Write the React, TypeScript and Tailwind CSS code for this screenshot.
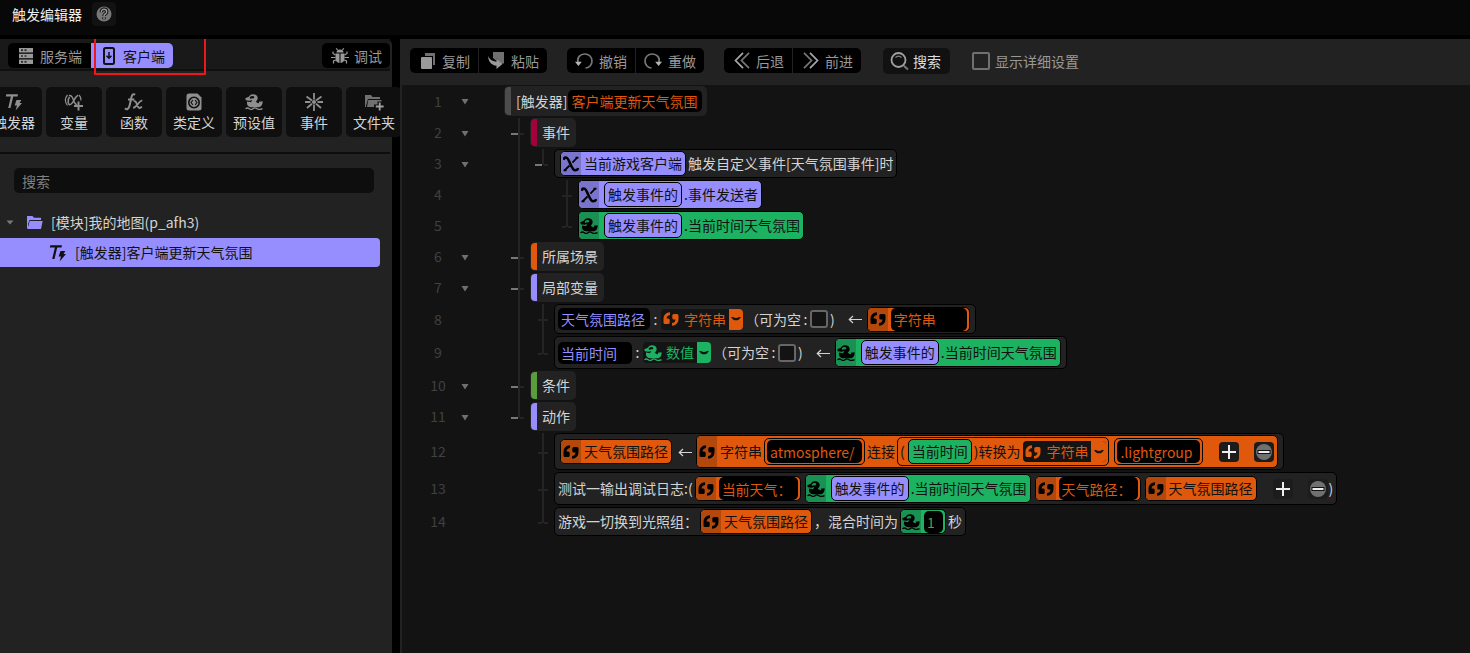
import type { ReactNode } from "react";
import clsx from "clsx";

type Tone = "orange" | "green" | "purple";

const toneBg = {
  orange: "bg-[#df580b]",
  green: "bg-[#1db262]",
  purple: "bg-[#968eff]",
};

const toneDark = {
  orange: "bg-[#b3480c]",
  green: "bg-[#1a9052]",
  purple: "bg-[#7a74cc]",
};

const toneText = {
  orange: "text-[#df580b]",
  green: "text-[#1db262]",
  purple: "text-[#968eff]",
};

/* ---------- icons ---------- */

function QuoteIcon() {
  return (
    <svg width="16" height="14" viewBox="0 0 16 14" fill="currentColor">
      <path d="M7 .3C3 .5 .5 3 .5 7.300V10.500Q.5 12 2 12H5Q6.700 12 6.700 10.400V8Q6.700 6.500 5.200 6.500H3.500C3.600 4.500 4.800 3.200 7 2.900Z" />
      <path d="M9 13.700C13 13.500 15.500 11 15.500 6.700V3.500Q15.500 2 14 2H11Q9.300 2 9.300 3.600V6Q9.300 7.500 10.800 7.500H12.500C12.400 9.500 11.200 10.800 9 11.100Z" />
    </svg>
  );
}

function DuckIcon() {
  return (
    <svg width="18" height="16" viewBox="0 0 18 16" fill="currentColor">
      <path
        fillRule="evenodd"
        d="M.3 4.300L3.800 2.700C4.800 1 6.300 .2 8 .2C10.800 .2 12.700 1.800 12.700 4C12.700 5.600 11.800 6.700 10.700 7.700L13 9.300L14.200 8.900L13.800 7.800L17.600 7.200C17.800 10.600 16.300 13.200 13.300 13.200H6.200C3.800 13.200 2 11.500 2 9.500V7.500L6 8.300L7.300 6L4.500 6.700L.8 6.300ZM5.800 2.300L4.600 3.700L5 4.700L8.800 4.200C9.700 3.500 9.300 2.100 8 2Z"
      />
      <path d="M.5 14.900Q2.300 13.200 4.300 14.700T8 14.700T12 14.700T17.500 14.700" fill="none" stroke="currentColor" strokeWidth="1.300" />
    </svg>
  );
}

function ChiIcon() {
  return (
    <svg width="16" height="16" viewBox="0 0 16 16" fill="none" stroke="currentColor">
      <path d="M.7 3.800C.9 2 1.800 1.500 3 1.500C6.500 1.500 8 14.300 12.300 14.300C13.800 14.300 14.800 13.600 15.200 12" strokeWidth="2.600" />
      <path d="M14.300 1.500L9.400 6.700M6.500 9.500L1.500 14.500" strokeWidth="1.800" />
      <path d="M12.500 1.600H15.500M.5 14.300H3.500" strokeWidth="1.800" />
    </svg>
  );
}

function TriggerIcon() {
  return (
    <svg width="18" height="18" viewBox="0 0 18 18" fill="currentColor">
      <path d="M1.300 1.300H13L12.500 3.500H8.200L5.500 15H3.200L5.900 3.500H.8Z" />
      <path d="M11.500 7H16.300L14.500 10H17L10.600 17.500L12 12.600H9.600Z" />
    </svg>
  );
}

function AlphaPlusIcon() {
  return (
    <svg width="20" height="18" viewBox="0 0 20 18" fill="none" stroke="currentColor">
      <path d="M3.500 2Q-.8 7 3.500 12.500M15 2Q17.300 4.500 16.800 7.500" strokeWidth="1.200" />
      <path d="M5 2.700C10 1.200 9 12 13 11.500M14 2.200C10 4.700 9 12 5.500 11.700C3.500 11 4 6 5.500 4" strokeWidth="1.500" />
      <path d="M14.500 8.500V17.500M10 13H19" strokeWidth="2" />
    </svg>
  );
}

function FxIcon() {
  return (
    <svg width="20" height="18" viewBox="0 0 20 18" fill="none" stroke="currentColor">
      <path d="M1 15.300C3 17.300 4.800 15.800 5.600 12.500L7.500 4C8.200 1.300 9.300 .7 11.200 1.700M4 6.500H10.300" strokeWidth="2" />
      <path d="M9.700 8.500C13 6.300 12.700 15 15.300 15C16.300 15 17.200 14.500 17.800 13.500M18.300 7.700C15 7 12.500 15.300 9 14.700" strokeWidth="1.800" />
    </svg>
  );
}

function ClassIcon() {
  return (
    <svg width="16" height="18" viewBox="0 0 16 18">
      <path fill="currentColor" d="M3 .5H11.500L15.500 4.500V15Q15.500 17.500 13 17.500H3Q.5 17.500 .5 15V3Q.5 .5 3 .5Z" />
      <circle cx="8" cy="9.500" r="5.200" fill="none" stroke="#101010" strokeWidth="1.600" />
      <path d="M6.900 7.200L5 9.500L6.900 11.800M9.100 7.200L11 9.500L9.100 11.800" fill="none" stroke="#101010" strokeWidth="1.100" />
    </svg>
  );
}

function EventIcon() {
  return (
    <svg width="18" height="18" viewBox="0 0 18 18" stroke="currentColor" strokeWidth="1.800">
      <path d="M9 0V6.500M9 11.500V18M1.500 3.500L7 7.500M16.500 3.500L11 7.500M0 9H5.500M12.500 9H18M2 15L7 10.800M16 15L11 10.800" />
      <circle cx="9" cy="9" r="1.200" fill="currentColor" />
    </svg>
  );
}

function FolderPlusIcon() {
  return (
    <svg width="20" height="18" viewBox="0 0 20 18" fill="currentColor" className="text-[#707070]">
      <path d="M1 2H7L8.500 4H16V6H4L2 12.500V14H1Z" />
      <path d="M4.200 7H17.500V8.500H13.500V11.500H10V14H3Z" />
      <path fill="#a0a0a0" d="M14.800 9.500H16.600V12.600H19.600V14.400H16.600V17.500H14.800V14.400H11.800V12.600H14.800Z" />
    </svg>
  );
}

function FolderIcon() {
  return (
    <svg width="16" height="13" viewBox="0 0 16 13" fill="currentColor">
      <path d="M0 0H5.500L7 1.800H14V4H2.500L1 8V12.500H0Z" />
      <path d="M2.700 5H15.700L14 12.900H.5Z" />
    </svg>
  );
}

function ServerIcon() {
  return (
    <svg width="14" height="16" viewBox="0 0 14 16">
      <path fill="currentColor" d="M0 0H14V4.500H0ZM0 5.800H14V10.300H0ZM0 11.600H14V16H0Z" />
      <path d="M2 2.200H4M5.500 2.200H7.500M2 8H4M5.500 8H7.500M2 13.800H4M5.500 13.800H7.500" stroke="#000" strokeWidth="1.200" />
    </svg>
  );
}

function DeviceIcon() {
  return (
    <svg width="12" height="18" viewBox="0 0 12 18" fill="none" stroke="currentColor">
      <rect x="1" y="1" width="10" height="16" rx="1.500" strokeWidth="2" />
      <path d="M6 5V11M3.500 8.800L6 11.300L8.500 8.800" strokeWidth="1.500" />
    </svg>
  );
}

function BugIcon() {
  return (
    <svg width="18" height="16" viewBox="0 0 18 16">
      <path fill="currentColor" d="M5.500 4.500Q5.500 1.500 9 1.500T12.500 4.500ZM4.500 5.500H8.500V15Q4.500 14.500 4.500 10ZM9.500 5.500H13.500V10Q13.500 14.500 9.500 15Z" />
      <path d="M4.500 7L2 5.500V3.500M13.500 7L16 5.500V3.500M4.500 9.500H0M13.500 9.500H18M5 12L2.500 13V15.500M13 12L15.500 13V15.500M6.500 2L5.300 .3M11.500 2L12.700 .3" fill="none" stroke="currentColor" strokeWidth="1.200" />
    </svg>
  );
}

function CopyIcon() {
  return (
    <svg width="15" height="16" viewBox="0 0 15 16">
      <path fill="#707070" d="M4 0H14V12H12V3H4Z" />
      <rect y="4" width="11" height="12" rx="1" fill="#9a9a9a" />
    </svg>
  );
}

function PasteIcon() {
  return (
    <svg width="17" height="17" viewBox="0 0 17 17">
      <path fill="#707070" d="M5 0H16V11.500H13.500L8.500 6.500V9L5 6Z" />
      <path fill="#9a9a9a" d="M0 4C2 8 5 9.500 8.500 9.700V6.500L14.500 12L8.500 17V13.700C3.500 13.300 .3 9.500 0 4Z" />
    </svg>
  );
}

function UndoIcon({ flip = false }: { flip?: boolean }) {
  return (
    <svg width="18" height="16" viewBox="0 0 18 16" className={flip ? "-scale-x-100" : ""}>
      <path d="M3 9.500C1.800 4.500 5 1 9.800 1C14 1 17 4 17 8C17 12 14 15 10.500 15" fill="none" stroke="#777" strokeWidth="1.700" />
      <path d="M0 8.800H6.800L3.400 13Z" fill="#b5b5b5" />
    </svg>
  );
}

function ChevronsIcon({ flip = false }: { flip?: boolean }) {
  return (
    <svg width="16" height="17" viewBox="0 0 16 17" fill="none" strokeWidth="1.700" className={flip ? "-scale-x-100" : ""}>
      <path d="M9 .8L1.500 8.500L9 16.200" stroke="#a8a8a8" />
      <path d="M15 .8L7.500 8.500L15 16.200" stroke="#777" />
    </svg>
  );
}

function SearchIcon() {
  return (
    <svg width="19" height="18" viewBox="0 0 19 18" fill="none">
      <circle cx="8.500" cy="8" r="7" stroke="#a0a0a0" strokeWidth="1.800" />
      <path d="M5.500 5.500Q8.500 2.800 11.500 5.500" stroke="#888" strokeWidth="1.200" />
      <path d="M13.800 13.800L18 17.500" stroke="#777" strokeWidth="2" />
    </svg>
  );
}

function HelpIcon() {
  return (
    <svg width="16" height="16" viewBox="0 0 16 16">
      <circle cx="8" cy="8" r="7.500" fill="#777" />
      <path d="M5.300 6.200C5.300 4.200 6.500 3.300 8 3.300S10.700 4.300 10.700 5.900C10.700 7.900 8 7.900 8 10M8 11.300V13.300" fill="none" stroke="#111" strokeWidth="3.400" />
      <path d="M5.300 6.200C5.300 4.200 6.500 3.300 8 3.300S10.700 4.300 10.700 5.900C10.700 7.900 8 7.900 8 10M8 11.300V13" fill="none" stroke="#999" strokeWidth="1.400" />
    </svg>
  );
}

function Caret() {
  return (
    <svg width="8" height="7" viewBox="0 0 8 7" className="fill-[#707070]">
      <path d="M.5 1H7.500L4 6.500Z" />
    </svg>
  );
}

function Smile() {
  return (
    <svg width="10" height="4" viewBox="0 0 10 4">
      <path d="M0 0H2Q5 1.800 8 0H10L8 2.400Q5 4.200 2 2.400Z" fill="#141414" />
    </svg>
  );
}

const toneIcon = { orange: <QuoteIcon />, green: <DuckIcon />, purple: <ChiIcon /> };

/* ---------- blocks ---------- */

function Chip({ tone, tall, big, className, children }: { tone: Tone; tall?: boolean; big?: boolean; className?: string; children: ReactNode }) {
  return (
    <span className={clsx("flex items-center overflow-hidden rounded-[5px] border border-black text-[#111]", big ? "h-[33px]" : tall ? "h-[29px]" : "h-[25px]", toneBg[tone], className)}>
      <span className={clsx("flex w-5 shrink-0 items-center justify-center self-stretch text-black", toneDark[tone])}>{toneIcon[tone]}</span>
      {children}
    </span>
  );
}

function Var({ tone, children }: { tone: Tone; children: ReactNode }) {
  return <span className={clsx("flex h-[25px] items-center rounded-[5px] border border-black px-[3px] text-[#111]", toneBg[tone])}>{children}</span>;
}

/* a property read from the event that fired the trigger */
function EventMember({ tone, name, className }: { tone: Tone; name: string; className?: string }) {
  return (
    <Chip tone={tone} tall className={clsx("pr-[3px]", className)}>
      <span className="mr-[2px] ml-[5px]">
        <Var tone="purple">触发事件的</Var>
      </span>
      .{name}
    </Chip>
  );
}

function Field({ label, value, tone = "orange", className }: { label: string; value: string; tone?: Tone; className: string }) {
  return <input aria-label={label} defaultValue={value} className={clsx("rounded-[5px] bg-black px-[3px] outline-none", toneText[tone], className)} />;
}

function TypeSelect({ tone, value, width, plain }: { tone: Tone; value: string; width: string; plain?: boolean }) {
  return (
    <span className={clsx("flex h-[21px] items-center overflow-hidden rounded-sm bg-[#141414]", toneText[tone])}>
      <span className="flex w-5 justify-center">{toneIcon[tone]}</span>
      <select aria-label="类型" defaultValue={value} className={clsx("appearance-none bg-transparent pl-[3px] outline-none", width)}>
        <option>{value}</option>
      </select>
      <span className={clsx("flex items-center justify-center self-stretch", plain ? "w-[15px]" : "w-[14px]", toneBg[tone])}>
        <Smile />
      </span>
    </span>
  );
}

function Nullable() {
  return (
    <label className="ml-[2px] flex items-center">
      （可为空<span className="w-[9px] text-center">:</span>
      <input type="checkbox" className="size-[18px] appearance-none rounded-[3px] border-2 border-[#666] bg-[#131313]" />
      <span className="ml-[2px]">)</span>
    </label>
  );
}

function AddRemove() {
  return (
    <span className="ml-4 flex gap-[15px]">
      <button aria-label="添加" className="flex size-5 items-center justify-center rounded-[4px] bg-[#1c1c1c]">
        <svg width="14" height="14" viewBox="0 0 14 14" stroke="#eee" strokeWidth="2">
          <path d="M7 0V14M0 7H14" />
        </svg>
      </button>
      <button aria-label="移除" className="flex size-5 items-center justify-center rounded-[4px] bg-[#1c1c1c]">
        <svg width="16" height="16" viewBox="0 0 16 16">
          <circle cx="8" cy="8" r="8" fill="#707070" />
          <path d="M1.500 8H14.500" stroke="#111" strokeWidth="4" />
          <path d="M2.500 8H13.500" stroke="#eee" strokeWidth="2" />
        </svg>
      </button>
    </span>
  );
}

function Arrow({ className }: { className: string }) {
  return (
    <svg width="14" height="10" viewBox="0 0 14 10" fill="none" stroke="#d4d4d4" strokeWidth="1.200" className={className}>
      <path d="M14 5.500H1.500M5 2L1.300 5.500L5 9" />
    </svg>
  );
}

function Line({ children, height = "h-[29px]", pad = "px-[3px]" }: { children: ReactNode; height?: string; pad?: string }) {
  return <div className={clsx("flex items-center rounded-[5px] border border-black bg-[#222]", height, pad)}>{children}</div>;
}

function Section({ color, children }: { color: string; children: ReactNode }) {
  return (
    <div className="flex h-[29px] items-center overflow-hidden rounded-[5px] bg-[#222] pr-[6px] pl-px">
      <span className={clsx("mr-[5px] h-[27px] w-[6px] rounded-l-[4px]", color)} />
      {children}
    </div>
  );
}

/* "v" passes through, "t" branches, "l" ends here; upper case adds the fold dash */
function Guide({ kind, first }: { kind: string; first: boolean }) {
  const shape = kind.toLowerCase();
  const folds = kind !== " " && kind !== shape;
  const line = shape !== " ";
  const tick = shape === "t" || shape === "l";
  return (
    <span className={clsx("flex shrink-0 items-center", first ? "w-[26px] pl-[6px]" : "w-6 pl-1")}>
      <span className="flex w-2 justify-end">
        <span className={clsx("h-[2px]", folds ? "w-[7px] bg-[#777]" : "w-1", tick && !folds && "bg-[#242424]")} />
      </span>
      <span className="flex w-[2px] flex-col self-stretch">
        <span className={clsx("flex-1", line && "bg-[#242424]")} />
        <span className={clsx("flex-1", line && shape !== "l" && "bg-[#242424]")} />
      </span>
      <span className={clsx("h-[2px] w-1", tick && "bg-[#242424]")} />
    </span>
  );
}

interface Row {
  guides: string;
  fold?: boolean;
  body: ReactNode;
}

const rows: Row[] = [
  {
    guides: "",
    fold: true,
    body: (
      <div className="flex h-[30px] items-center rounded-[5px] bg-[#222] pr-[5px] pl-px">
        <span className="mr-[5px] h-7 w-[6px] rounded-l-[4px] bg-[#4c4c4c]" />
        <span className="mr-px">[触发器]</span>
        <Field label="触发器名称" value="客户端更新天气氛围" className="h-[22px] w-[134px]" />
      </div>
    ),
  },
  { guides: "T", fold: true, body: <Section color="bg-[#a3003c]">事件</Section> },
  {
    guides: "vL",
    fold: true,
    body: (
      <Line pad="pl-[5px] pr-[3px]">
        <Chip tone="purple" className="mr-[2px]">
          <span className="px-[3px]">当前游戏客户端</span>
        </Chip>
        触发自定义事件[天气氛围事件]时
      </Line>
    ),
  },
  { guides: "v t", body: <EventMember tone="purple" name="事件发送者" /> },
  { guides: "v l", body: <EventMember tone="green" name="当前时间天气氛围" /> },
  { guides: "T", fold: true, body: <Section color="bg-[#df580b]">所属场景</Section> },
  { guides: "T", fold: true, body: <Section color="bg-[#968eff]">局部变量</Section> },
  {
    guides: "vt",
    body: (
      <Line height="h-[30px]" pad="pl-[3px] pr-[5px]">
        <Field label="变量名" value="天气氛围路径" tone="purple" className="h-[22px] w-[92px]" />
        <span className="w-[11px] text-center">:</span>
        <TypeSelect tone="orange" value="字符串" width="w-12" />
        <Nullable />
        <Arrow className="mr-[5px] ml-[13px]" />
        <Chip tone="orange">
          <Field label="初始值" value="字符串" className="mr-[2px] ml-[3px] h-[23px] w-[76px]" />
        </Chip>
      </Line>
    ),
  },
  {
    guides: "vl",
    body: (
      <Line height="h-[33px]" pad="pl-[3px] pr-[5px]">
        <Field label="变量名" value="当前时间" tone="purple" className="h-[22px] w-[74px]" />
        <span className="w-[11px] text-center">:</span>
        <TypeSelect tone="green" value="数值" width="w-[34px]" />
        <Nullable />
        <Arrow className="mr-[5px] ml-[13px]" />
        <EventMember tone="green" name="当前时间天气氛围" />
      </Line>
    ),
  },
  { guides: "T", fold: true, body: <Section color="bg-[#5a9e3c]">条件</Section> },
  { guides: "L", fold: true, body: <Section color="bg-[#968eff]">动作</Section> },
  {
    guides: " t",
    body: (
      <Line height="h-[37px]" pad="px-[5px]">
        <Chip tone="orange">
          <span className="px-[3px]">天气氛围路径</span>
        </Chip>
        <Arrow className="mr-1 ml-[6px]" />
        <Chip tone="orange" big className="pr-[3px]">
          <span className="pr-[2px] pl-[3px]">字符串</span>
          <span className="flex h-[27px] items-center rounded-[5px] border border-black px-[2px]">
            <Field label="文本" value="atmosphere/" className="h-[23px] w-[95px]" />
          </span>
          <span className="px-[2px]">连接</span>
          <span className="flex h-[29px] items-center rounded-[5px] border border-black px-[2px]">
            <span className="mr-[3px]">(</span>
            <Var tone="green">当前时间</Var>
            <span className="pr-[3px] pl-[2px]">)转换为</span>
            <TypeSelect tone="orange" value="字符串" width="w-12" plain />
          </span>
          <span className="ml-[5px] flex h-[27px] items-center rounded-[5px] border border-black px-[2px]">
            <Field label="文本" value=".lightgroup" className="h-[23px] w-[83px]" />
          </span>
          <AddRemove />
        </Chip>
      </Line>
    ),
  },
  {
    guides: " t",
    body: (
      <Line height="h-[33px]">
        <span className="mr-[2px]">测试一输出调试日志:(</span>
        <Chip tone="orange">
          <Field label="文本" value="当前天气：" className="mr-[2px] ml-[3px] h-[23px] w-[79px]" />
        </Chip>
        <EventMember tone="green" name="当前时间天气氛围" className="mx-1" />
        <Chip tone="orange">
          <Field label="文本" value="天气路径：" className="mr-[2px] ml-[3px] h-[23px] w-[79px]" />
        </Chip>
        <Chip tone="orange" className="ml-1">
          <span className="px-[3px]">天气氛围路径</span>
        </Chip>
        <AddRemove />
        <span className="ml-px">)</span>
      </Line>
    ),
  },
  {
    guides: " l",
    body: (
      <Line>
        游戏一切换到光照组：
        <Chip tone="orange" className="mx-[2px]">
          <span className="px-[3px]">天气氛围路径</span>
        </Chip>
        ，混合时间为
        <Chip tone="green" className="mx-[2px]">
          <Field label="混合时间" value="1" className="mr-[2px] ml-[3px] h-[22px] w-[19px] text-[#5a9e3c]!" />
        </Chip>
        秒
      </Line>
    ),
  },
];

const tools = [
  { label: "触发器", icon: <TriggerIcon /> },
  { label: "变量", icon: <AlphaPlusIcon /> },
  { label: "函数", icon: <FxIcon /> },
  { label: "类定义", icon: <ClassIcon /> },
  { label: "预设值", icon: <DuckIcon /> },
  { label: "事件", icon: <EventIcon /> },
  { label: "文件夹", icon: <FolderPlusIcon /> },
];

function Sidebar() {
  return (
    <aside className="w-[400px] shrink-0 overflow-hidden">
      <div className="min-h-full w-[392px] rounded-tr-md bg-[#222]">
        <div className="relative flex h-8 w-[390px] items-start justify-between border-b-2 border-[#101010] bg-[#191919] pt-1 pl-2 leading-5 text-[#999]">
          <div className="flex overflow-hidden rounded-[5px]">
            <button className="flex h-[25px] w-[83px] items-center gap-[7px] bg-black pl-[11px]">
              <ServerIcon />
              服务端
            </button>
            <button className="flex h-[25px] w-[82px] items-center gap-2 bg-[#968eff] pl-3 text-[#111]">
              <DeviceIcon />
              客户端
            </button>
          </div>
          <button className="flex h-[25px] items-center gap-[5px] rounded-[5px] bg-black pr-2 pl-[9px]">
            <BugIcon />
            调试
          </button>
          <div className="pointer-events-none absolute -top-1 left-[94px] h-10 w-28 border-2 border-[#f0161c]" />
        </div>

        <div className="-ml-[14px] flex w-[416px] gap-1 pt-4 pb-[15px]">
          {tools.map((tool) => (
            <button key={tool.label} className="flex h-[50px] w-14 shrink-0 flex-col items-center rounded-[5px] bg-[#0f0f0f] pt-[5px] text-[#d4d4d4]">
              <span className="flex h-5 items-center text-[#8f8f8f]">{tool.icon}</span>
              <span>{tool.label}</span>
            </button>
          ))}
        </div>

        <div className="w-[390px] border-t-2 border-[#0d0d0d] px-[14px] pt-[14px] pb-4">
          <input type="search" aria-label="搜索" placeholder="搜索" className="block h-[25px] w-[360px] rounded-[5px] bg-[#0e0e0e] px-2 outline-none placeholder:text-[#808080]" />
        </div>

        <ul>
          <li className="flex h-[29px] items-center pb-[2px] pl-[6px] text-[#d4d4d4]">
            <svg width="8" height="5" viewBox="0 0 8 5" className="fill-[#777]">
              <path d="M.5 .5H7.500L4 4.500Z" />
            </svg>
            <span className="mr-2 ml-[13px] text-[#968eff]">
              <FolderIcon />
            </span>
            [模块]我的地图(p_afh3)
          </li>
          <li className="flex h-[29px] w-[380px] items-center gap-2 rounded-r-sm bg-[#968eff] pl-[49px] text-[#111]">
            <TriggerIcon />
            [触发器]客户端更新天气氛围
          </li>
        </ul>
      </div>
    </aside>
  );
}

function ButtonPair({ items }: { items: { label: string; icon: ReactNode }[] }) {
  return (
    <div className="flex divide-x divide-[#222] overflow-hidden rounded-[5px]">
      {items.map((item) => (
        <button key={item.label} className="flex h-[25px] items-center justify-end gap-[6px] bg-black pr-2 first:w-[69px] last:w-[68px]">
          {item.icon}
          {item.label}
        </button>
      ))}
    </div>
  );
}

export default function App() {
  return (
    <div className="flex min-h-screen flex-col bg-black font-['Noto_Sans_CJK_SC',sans-serif] text-[14px] leading-[21px] whitespace-nowrap text-[#d4d4d4]">
      <header className="mb-1 flex h-[35px] shrink-0 items-start bg-[#080808] pt-[2px] pl-3">
        <h1 className="mt-[2px] text-[#eee]">触发编辑器</h1>
        <button aria-label="帮助" className="ml-[10px] flex size-6 items-center justify-center rounded-[4px] bg-[#121212]">
          <HelpIcon />
        </button>
      </header>

      <div className="flex flex-1">
        <Sidebar />

        <main className="min-w-0 flex-1 border-l-2 border-[#222] bg-[#131313]">
          <div className="flex h-[46px] items-center gap-5 bg-[#222] pb-[3px] pl-2 leading-5 text-[#999]">
            <ButtonPair items={[{ label: "复制", icon: <CopyIcon /> }, { label: "粘贴", icon: <PasteIcon /> }]} />
            <ButtonPair items={[{ label: "撤销", icon: <UndoIcon /> }, { label: "重做", icon: <UndoIcon flip /> }]} />
            <ButtonPair items={[{ label: "后退", icon: <ChevronsIcon /> }, { label: "前进", icon: <ChevronsIcon flip /> }]} />
            <button className="ml-[2px] flex h-[26px] items-center gap-1 rounded-[5px] bg-[#111] pr-[9px] pl-[7px] text-[#ddd]">
              <SearchIcon />
              搜索
            </button>
            <label className="ml-[2px] flex items-center gap-[5px]">
              <input type="checkbox" className="size-[18px] appearance-none rounded-[2px] border-2 border-[#707070]" />
              显示详细设置
            </label>
          </div>

          <ol className="pt-px">
            {rows.map((row, i) => (
              <li key={i} className="flex">
                <span className="flex w-[72px] items-center justify-center pb-[2px] text-[#404040]">{i + 1}</span>
                <span className="-ml-[14px] flex w-11 items-center pb-px pl-px">{row.fold && <Caret />}</span>
                {[...row.guides].map((kind, level) => (
                  <Guide key={level} kind={kind} first={level === 0} />
                ))}
                <div className="mb-[2px]">{row.body}</div>
              </li>
            ))}
          </ol>
        </main>
      </div>
    </div>
  );
}
